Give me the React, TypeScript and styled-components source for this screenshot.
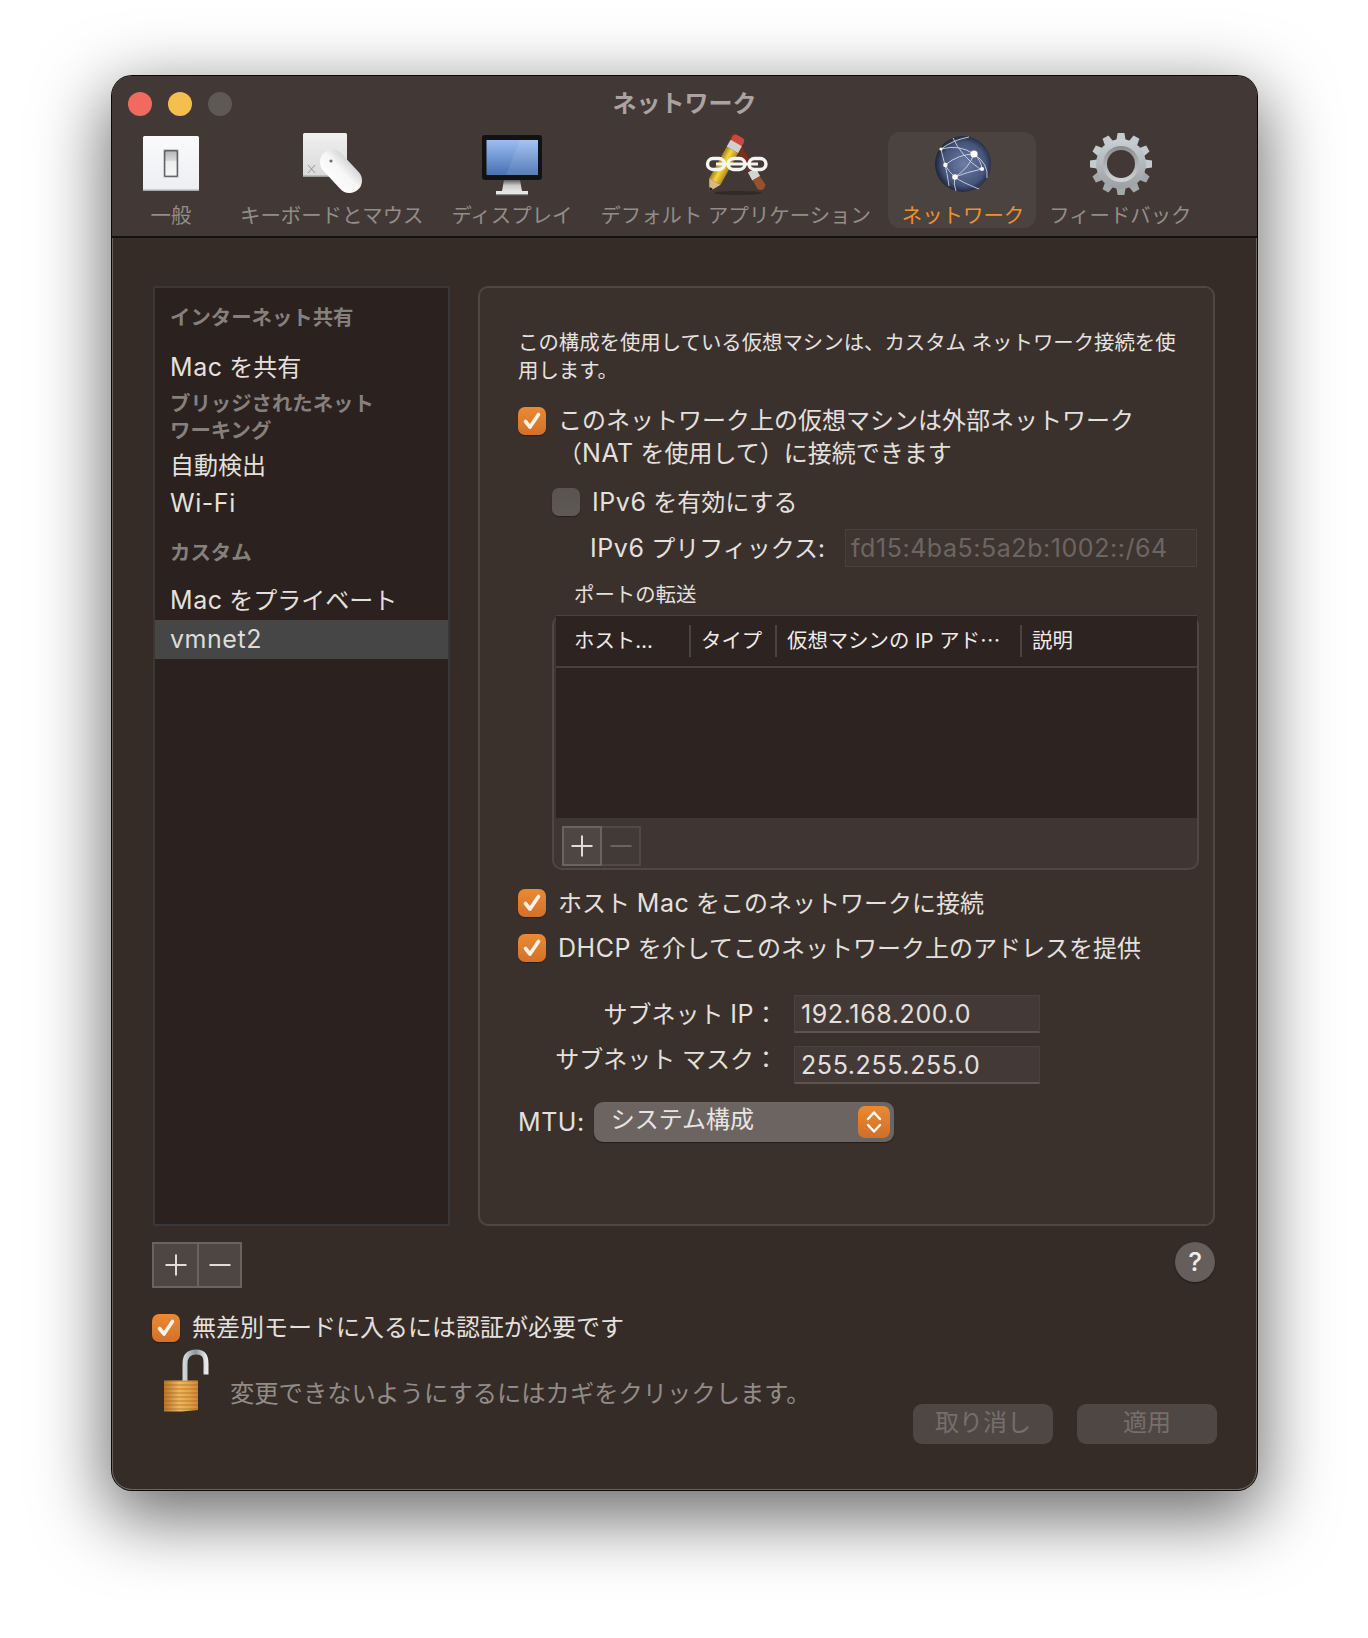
import React from 'react';
import styled, { createGlobalStyle } from 'styled-components';

const Global = createGlobalStyle`
  html, body { margin: 0; padding: 0; background: #fff; }
  body { font-family: Inter, "Noto Sans CJK JP", "Liberation Sans", sans-serif; color: #e4e0de; }
  * { box-sizing: border-box; }
`;

const Page = styled.div`
  width: 1368px;
  height: 1638px;
  padding: 76px 112px;
  overflow: hidden;
`;
const Win = styled.div`
  width: 1145px;
  height: 1414px;
  border-radius: 20px;
  background: #352c28;
  box-shadow: 0 0 0 1px #0c0a09, inset 0 0 0 1px #6a6461, 0 22px 70px 6px rgba(0, 0, 0, 0.58);
  overflow: hidden;
  display: flex;
  flex-direction: column;
`;
const Header = styled.header`
  height: 162px;
  flex: none;
  background: #423936;
  border-bottom: 2px solid #141110;
  display: flex;
  flex-direction: column;
`;
const TitleBar = styled.div`
  height: 56px;
  flex: none;
  display: grid;
  grid-template-columns: 1fr auto 1fr;
  align-items: center;
  padding: 0 16px;
`;
const Lights = styled.div`
  display: flex;
  gap: 16px;
`;
const Light = styled.span<{ $c: string }>`
  width: 24px;
  height: 24px;
  border-radius: 50%;
  background: ${p => p.$c};
`;
const Title = styled.div`
  font-size: 24px;
  font-weight: 700;
  line-height: 32px;
  color: #aaa3a0;
`;
const Tools = styled.nav`
  display: flex;
  padding-left: 4px;
`;
const Tool = styled.div<{ $active?: boolean; $min?: number }>`
  height: 96px;
  padding: ${p => (p.$active ? '0 12px 0 14px' : '0 14px')};
  margin: ${p => (p.$active ? '0 -1px 0 3px' : '0')};
  min-width: ${p => p.$min ?? 0}px;
  border-radius: 12px;
  display: flex;
  flex-direction: column;
  align-items: center;
  background: ${p => (p.$active ? '#4b4340' : 'transparent')};
`;
const ToolIcon = styled.svg`
  width: 80px;
  height: 72px;
  flex: none;
  display: block;
`;
const ToolLabel = styled.span<{ $active?: boolean }>`
  font-size: 20.4px;
  line-height: 24px;
  white-space: pre;
  color: ${p => (p.$active ? '#f0902f' : '#938d8a')};
`;
const L = styled.span`
  font-size: 1.042em;
  letter-spacing: 0.022em;
`;

const Content = styled.div`
  flex: 1;
  padding: 48px 40px 0;
  display: flex;
  flex-direction: column;
`;
const MainGrid = styled.div`
  height: 940px;
  flex: none;
  margin: 0 2px 0 1px;
  display: grid;
  grid-template-columns: 297px 737px;
  column-gap: 28px;
`;
const Sidebar = styled.aside`
  background: #2b211e;
  border: 2px solid #393837;
  padding-top: 16px;
  display: flex;
  flex-direction: column;
`;
const SideHead = styled.div<{ $top?: number }>`
  font-size: 20.4px;
  font-weight: 700;
  line-height: 28px;
  color: #86807d;
  padding-left: 15px;
  margin-top: ${p => p.$top ?? 0}px;
`;
const SideItem = styled.div<{ $top?: number; $selected?: boolean }>`
  font-size: 24px;
  line-height: ${p => (p.$selected ? 38 : 36)}px;
  padding-left: 15px;
  margin-top: ${p => p.$top ?? 0}px;
  color: ${p => (p.$selected ? '#dcdcdc' : '#e4e0de')};
  background: ${p => (p.$selected ? '#464646' : 'transparent')};
`;
const SideWrapped = styled.div`
  font-size: 20.4px;
  font-weight: 700;
  line-height: 27px;
  color: #86807d;
  margin: 4px 0 4px 15px;
  max-width: 218px;
`;
const Panel = styled.section`
  background: #3a312d;
  border: 2px solid #4e4744;
  border-radius: 10px;
  padding: 41px 0 0 38px;
  display: flex;
  flex-direction: column;
`;
const Para = styled.p`
  margin: 0;
  width: 662px;
  font-size: 20.4px;
  line-height: 28px;
  color: #e6e2e0;
`;
const CheckRow = styled.div<{ $top?: number; $left?: number }>`
  display: flex;
  align-items: flex-start;
  gap: 12px;
  margin-top: ${p => p.$top ?? 0}px;
  margin-left: ${p => p.$left ?? 0}px;
  font-size: 24px;
  line-height: 32px;
  color: #e4e0de;
`;
const Box = styled.span<{ $on?: boolean }>`
  width: 28px;
  height: 28px;
  flex: none;
  margin-top: 2px;
  border-radius: 7px;
  display: flex;
  align-items: center;
  justify-content: center;
  background: ${p => (p.$on ? 'linear-gradient(#ea8a33, #d3702a)' : 'linear-gradient(#5a5451, #5f5956)')};
  box-shadow: 0 1px 1px rgba(0, 0, 0, 0.35);
`;
const FieldRow = styled.div`
  margin: 10px 0 0 72px;
  display: grid;
  grid-template-columns: 255px 352px;
  align-items: center;
`;
const FieldLabel = styled.span`
  font-size: 24px;
  line-height: 32px;
  color: #e4e0de;
  white-space: nowrap;
`;
const PrefixInput = styled.div`
  height: 38px;
  padding-left: 5px;
  font-size: 25px;
  letter-spacing: 0.55px;
  line-height: 36px;
  white-space: nowrap;
  color: #6c6663;
  background: #3e3531;
  border: 1px solid #48403c;
`;
const GroupLabel = styled.div`
  margin: 14px 0 0 56px;
  font-size: 20.4px;
  line-height: 28px;
  color: #e4e0de;
`;
const TableWrap = styled.div`
  margin: 6px 0 0 34px;
  width: 647px;
  height: 255px;
  flex: none;
  border: 2px solid #4e4744;
  border-top: none;
  border-radius: 10px;
  padding: 0 0 0 2px;
  display: flex;
  flex-direction: column;
  background: #3f3633;
`;
const TableHead = styled.div`
  height: 53px;
  flex: none;
  background: #2d2320;
  border-top: 1px solid #4a423e;
  border-bottom: 2px solid #48403c;
  display: grid;
  grid-template-columns: 133px 86px 245px 1fr;
  align-items: center;
`;
const HeadCell = styled.div<{ $sep?: boolean }>`
  height: 32px;
  line-height: 32px;
  font-size: 20.4px;
  padding-left: ${p => (p.$sep ? 10 : 18)}px;
  color: #efebe9;
  white-space: nowrap;
  border-left: ${p => (p.$sep ? '2px solid #4b4340' : 'none')};
`;
const TableBody = styled.div`
  height: 150px;
  flex: none;
  background: #2d2320;
`;
const TableFoot = styled.div`
  flex: 1;
  padding: 8px 0 0 6px;
`;
const SegGroup = styled.div`
  display: flex;
`;
const Seg = styled.div<{ $dim?: boolean; $joined?: boolean; $h: number }>`
  display: inline-flex;
  height: ${p => p.$h}px;
  border: 2px solid ${p => (p.$dim ? '#504945' : '#6a6461')};
  border-left-width: ${p => (p.$joined ? 0 : 2)}px;
`;
const SegCell = styled.div<{ $dim?: boolean; $w: number }>`
  width: ${p => p.$w}px;
  display: flex;
  align-items: center;
  justify-content: center;
  background: ${p => (p.$dim ? '#423a36' : '#4e4643')};
`;
const SubnetGrid = styled.div`
  margin-top: 30px;
  display: grid;
  grid-template-columns: 262px 246px;
  grid-auto-rows: 38px;
  row-gap: 13px;
  column-gap: 14px;
  align-items: center;
  justify-content: start;
`;
const SubnetLabel = styled.div<{ $raise?: boolean }>`
  text-align: right;
  font-size: 24px;
  line-height: 32px;
  white-space: nowrap;
  color: #e4e0de;
  padding-right: 2px;
  padding-bottom: ${p => (p.$raise ? 10 : 0)}px;
`;
const ValueInput = styled.div`
  height: 38px;
  padding-left: 6px;
  font-size: 25px;
  letter-spacing: 0.6px;
  line-height: 37px;
  color: #e4e0de;
  background: #433a37;
  border: 1px solid #4a423e;
  border-bottom: 2px solid #5b5451;
`;
const MtuRow = styled.div`
  margin-top: 18px;
  display: flex;
  align-items: center;
  gap: 9px;
`;
const Select = styled.div`
  width: 300px;
  height: 40px;
  padding: 0 4px 0 17px;
  border-radius: 9px;
  background: #6b6461;
  box-shadow: 0 1px 1px rgba(0, 0, 0, 0.4);
  display: flex;
  align-items: center;
  justify-content: space-between;
  font-size: 24px;
`;
const SelectText = styled.span`
  line-height: 32px;
  margin-top: -5px;
  color: #e8e4e2;
`;
const Stepper = styled.span`
  width: 32px;
  height: 32px;
  border-radius: 7px;
  background: linear-gradient(#e88a35, #cf6f29);
  display: flex;
  align-items: center;
  justify-content: center;
`;
const UtilRow = styled.div`
  margin-top: 16px;
  padding-right: 2px;
  display: flex;
  align-items: flex-start;
  justify-content: space-between;
`;
const Help = styled.div`
  width: 40px;
  height: 40px;
  border-radius: 50%;
  background: #655e5b;
  color: #f0eeec;
  font-size: 26px;
  font-weight: 500;
  line-height: 40px;
  text-align: center;
  box-shadow: 0 1px 2px rgba(0, 0, 0, 0.4);
`;
const Footer = styled.div`
  margin-top: 4px;
  height: 96px;
  display: flex;
  justify-content: space-between;
  align-items: flex-end;
`;
const LockRow = styled.div`
  align-self: flex-start;
  display: flex;
  align-items: flex-start;
`;
const LockIcon = styled.svg`
  width: 78px;
  height: 68px;
  flex: none;
  display: block;
`;
const LockText = styled.span`
  margin-top: 31px;
  font-size: 24.3px;
  line-height: 28px;
  color: #928c89;
  white-space: nowrap;
`;
const Buttons = styled.div`
  display: flex;
  gap: 24px;
`;
const Btn = styled.div`
  width: 140px;
  height: 40px;
  border-radius: 9px;
  background: #4f4744;
  color: #756f6c;
  font-size: 24px;
  line-height: 38px;
  text-align: center;
`;

const Check = () => (
  <svg width="20" height="20" viewBox="0 0 20 20">
    <path d="M3.5 10.5 L8 16 L16.5 3.5" fill="none" stroke="#fbf3ea" strokeWidth="3.6" strokeLinecap="round" strokeLinejoin="round" />
  </svg>
);
const Plus = ({ c = '#e0dcda', s = 22 }: { c?: string; s?: number }) => (
  <svg width={s} height={s} viewBox="0 0 22 22">
    <path d="M11 0.5V21.5M0.5 11H21.5" stroke={c} strokeWidth="2" />
  </svg>
);
const Minus = ({ c = '#e0dcda', s = 22 }: { c?: string; s?: number }) => (
  <svg width={s} height={s} viewBox="0 0 22 22">
    <path d="M0.5 11H21.5" stroke={c} strokeWidth="2" />
  </svg>
);

const SwitchIcon = () => (
  <ToolIcon viewBox="0 0 80 72">
    <defs>
      <linearGradient id="sw1" x1="0" y1="0" x2="0" y2="1">
        <stop offset="0" stopColor="#fbfbfd" />
        <stop offset="1" stopColor="#eceef1" />
      </linearGradient>
      <linearGradient id="sw2" x1="0" y1="0" x2="0" y2="1">
        <stop offset="0" stopColor="#b4b5b6" />
        <stop offset="0.38" stopColor="#d8d9da" />
        <stop offset="0.42" stopColor="#eeeeef" />
        <stop offset="1" stopColor="#f6f6f7" />
      </linearGradient>
    </defs>
    <rect x="12" y="4" width="56" height="55" rx="1.5" fill="url(#sw1)" />
    <rect x="12" y="57.5" width="56" height="1.5" fill="#a9abae" />
    <rect x="32" y="17" width="16" height="29" rx="1" fill="#cfd0d2" />
    <rect x="33.8" y="18.8" width="12.4" height="25.4" fill="url(#sw2)" stroke="#33363a" strokeWidth="1" />
  </ToolIcon>
);
const MouseIcon = () => (
  <ToolIcon viewBox="0 0 80 72">
    <defs>
      <linearGradient id="kb1" x1="0" y1="0" x2="0" y2="1">
        <stop offset="0" stopColor="#f0f0f0" />
        <stop offset="1" stopColor="#d9d9d9" />
      </linearGradient>
      <linearGradient id="ms1" x1="0" y1="0" x2="0" y2="1">
        <stop offset="0" stopColor="#d6d6d6" />
        <stop offset="0.45" stopColor="#f6f6f6" />
        <stop offset="1" stopColor="#fdfdfd" />
      </linearGradient>
    </defs>
    <rect x="11" y="1" width="44" height="44" rx="1.5" fill="url(#kb1)" />
    <rect x="11" y="43.5" width="44" height="1.5" fill="#9b9b9b" />
    <path d="M16 33L23 41M23 33L16 41" stroke="#8e8e8e" strokeWidth="0.9" fill="none" />
    <rect x="-25" y="-12.5" width="50" height="25" rx="12.5" fill="url(#ms1)" transform="translate(49 39.3) rotate(47)" />
    <circle cx="39" cy="29" r="1.6" fill="#6e6e6e" />
  </ToolIcon>
);
const MonitorIcon = () => (
  <ToolIcon viewBox="0 0 80 72">
    <defs>
      <linearGradient id="mon1" x1="0" y1="0" x2="0" y2="1">
        <stop offset="0" stopColor="#9dbdf2" />
        <stop offset="1" stopColor="#4672b3" />
      </linearGradient>
      <linearGradient id="mon2" x1="0" y1="0" x2="0" y2="1">
        <stop offset="0" stopColor="#5f5f5f" />
        <stop offset="0.5" stopColor="#c9c9c9" />
        <stop offset="1" stopColor="#e4e4e4" />
      </linearGradient>
    </defs>
    <rect x="10" y="3" width="60" height="45" rx="3" fill="#121212" />
    <rect x="14.5" y="8" width="51.5" height="35" fill="url(#mon1)" />
    <path d="M48 8H66V43H34Z" fill="#ffffff" opacity="0.09" />
    <path d="M32 48H48L50 59H30Z" fill="url(#mon2)" />
    <rect x="24" y="59" width="32" height="4" fill="#e6e6e6" />
    <rect x="24" y="62" width="32" height="1.2" fill="#8a8a8a" />
  </ToolIcon>
);
const AppIcon = () => (
  <ToolIcon viewBox="0 0 80 72">
    <defs>
      <linearGradient id="pen1" x1="0" y1="0" x2="1" y2="0">
        <stop offset="0" stopColor="#a67f18" />
        <stop offset="0.45" stopColor="#f5d73e" />
        <stop offset="1" stopColor="#b18a1c" />
      </linearGradient>
    </defs>
    <ellipse cx="42" cy="61" rx="24" ry="2" fill="#2a2422" opacity="0.7" />
    <g transform="translate(51.5 30.5) rotate(-29)">
      <rect x="-3" y="-32" width="6" height="43" fill="#7d2e1a" />
      <rect x="-4.5" y="9" width="9" height="9" fill="#d4d4d4" />
      <path d="M-4 18H4L5 28Q0 34 -4 28Z" fill="#96522d" />
    </g>
    <g transform="translate(28.6 32) rotate(29)">
      <rect x="-6.5" y="-31.5" width="13" height="9" rx="4" fill="#cf4640" />
      <rect x="-6.5" y="-24" width="13" height="8" fill="#cfcfcf" />
      <rect x="-6.5" y="-16" width="13" height="36" fill="url(#pen1)" />
      <path d="M-6.5 20H6.5L0 31.5Z" fill="#d8b888" />
      <path d="M-2 27.5H2L0 31.5Z" fill="#161616" />
    </g>
    <path d="M20 32H62" stroke="#f2f2f2" strokeWidth="3" />
    <rect x="11.5" y="26.5" width="17" height="11" rx="5.5" fill="none" stroke="#f4f4f4" strokeWidth="3.4" />
    <rect x="32" y="26.5" width="17" height="11" rx="5.5" fill="none" stroke="#f4f4f4" strokeWidth="3.4" />
    <rect x="53" y="26.5" width="17" height="11" rx="5.5" fill="none" stroke="#f4f4f4" strokeWidth="3.4" />
  </ToolIcon>
);
const GlobeIcon = () => (
  <ToolIcon viewBox="0 0 80 72">
    <defs>
      <radialGradient id="gl1" cx="0.52" cy="0.5" r="0.55">
        <stop offset="0" stopColor="#6d7da6" />
        <stop offset="0.7" stopColor="#46537a" />
        <stop offset="1" stopColor="#141a29" />
      </radialGradient>
    </defs>
    <circle cx="40" cy="32" r="28" fill="url(#gl1)" />
    <g fill="none" stroke="#dfe4ee" strokeWidth="0.9" opacity="0.9">
      <path d="M18 17Q36 12 51 22T64 46" />
      <path d="M22 33Q36 22 51 22" />
      <path d="M22 33Q26 40 32 45T56 57" />
      <path d="M32 45Q44 40 59 37" />
      <path d="M51 22Q58 28 59 37" />
      <path d="M51 22Q46 36 32 45" />
      <path d="M30 6Q38 24 57 37" />
      <path d="M18 17Q20 26 22 33T26 54" />
      <path d="M18 17Q30 8 46 5" />
      <path d="M32 45Q30 52 33 59" />
    </g>
    <g fill="#fff">
      <circle cx="51" cy="22" r="3.6" />
      <circle cx="22.4" cy="33" r="2.2" />
      <circle cx="32" cy="45" r="2.8" />
      <circle cx="59" cy="37" r="2.1" />
      <circle cx="18" cy="17" r="1.6" />
    </g>
  </ToolIcon>
);
const GearIcon = () => {
  const teeth = Array.from({ length: 12 }, (_, i) => i * 30);
  return (
    <ToolIcon viewBox="0 0 80 72">
      <defs>
        <linearGradient id="gr1" x1="0" y1="0" x2="0" y2="1">
          <stop offset="0" stopColor="#c9d0d4" />
          <stop offset="1" stopColor="#9ba0a3" />
        </linearGradient>
        <linearGradient id="gr2" x1="0" y1="0" x2="0" y2="1">
          <stop offset="0" stopColor="#8a8d90" />
          <stop offset="1" stopColor="#d2d5d7" />
        </linearGradient>
      </defs>
      <g transform="translate(41 32)">
        {teeth.map(a => (
          <path key={a} d="M-4.6 -24 L-3.4 -31 H3.4 L4.6 -24Z" fill={a > 90 && a < 270 ? '#a3a8ab' : '#c4cbcf'} transform={`rotate(${a})`} />
        ))}
        <circle r="25" fill="url(#gr1)" />
        <circle r="18" fill="url(#gr2)" />
        <circle r="14" fill="#423936" />
      </g>
    </ToolIcon>
  );
};

const Lock = () => (
  <LockIcon viewBox="0 0 78 68">
    <defs>
      <linearGradient id="lk1" x1="0" y1="0" x2="1" y2="0">
        <stop offset="0" stopColor="#cfd6da" />
        <stop offset="0.5" stopColor="#8d979c" />
        <stop offset="1" stopColor="#e6eaec" />
      </linearGradient>
      <linearGradient id="lk2" x1="0" y1="0" x2="1" y2="0">
        <stop offset="0" stopColor="#b8752a" />
        <stop offset="0.45" stopColor="#f0b65c" />
        <stop offset="0.72" stopColor="#e5a548" />
        <stop offset="1" stopColor="#c98a34" />
      </linearGradient>
      <pattern id="lk3" width="4" height="4" patternUnits="userSpaceOnUse">
        <rect width="4" height="2" fill="#8a5518" opacity="0.28" />
      </pattern>
    </defs>
    <path d="M33 33V15.5C33 8 37 4 44.5 4S54 8 54 15.5V26.5" fill="none" stroke="url(#lk1)" strokeWidth="5" />
    <path d="M12 32.5H46V62L30 63.5H12Z" fill="url(#lk2)" />
    <path d="M12 32.5H46V62L30 63.5H12Z" fill="url(#lk3)" />
  </LockIcon>
);

export default function App() {
  return (
    <Page>
      <Global />
      <Win>
        <Header>
          <TitleBar>
            <Lights>
              <Light $c="#f06a5f" />
              <Light $c="#f5bf4f" />
              <Light $c="#5f5956" />
            </Lights>
            <Title>ネットワーク</Title>
            <span />
          </TitleBar>
          <Tools>
            <Tool $min={110}><SwitchIcon /><ToolLabel>一般</ToolLabel></Tool>
            <Tool><MouseIcon /><ToolLabel>キーボードとマウス</ToolLabel></Tool>
            <Tool><MonitorIcon /><ToolLabel>ディスプレイ</ToolLabel></Tool>
            <Tool><AppIcon /><ToolLabel>デフォルト アプリケーション</ToolLabel></Tool>
            <Tool $active><GlobeIcon /><ToolLabel $active>ネットワーク</ToolLabel></Tool>
            <Tool><GearIcon /><ToolLabel>フィードバック</ToolLabel></Tool>
          </Tools>
        </Header>
        <Content>
          <MainGrid>
            <Sidebar>
              <SideHead>インターネット共有</SideHead>
              <SideItem $top={17}><L>Mac</L> を共有</SideItem>
              <SideWrapped>ブリッジされたネットワーキング</SideWrapped>
              <SideItem>自動検出</SideItem>
              <SideItem $top={1}><L>Wi-Fi</L></SideItem>
              <SideHead $top={17}>カスタム</SideHead>
              <SideItem $top={15}><L>Mac</L> をプライベート</SideItem>
              <SideItem $top={1} $selected><L>vmnet2</L></SideItem>
            </Sidebar>
            <Panel>
              <Para>この構成を使用している仮想マシンは、カスタム ネットワーク接続を使用します。</Para>
              <CheckRow $top={20}>
                <Box $on><Check /></Box>
                <span>このネットワーク上の仮想マシンは外部ネットワーク<br />（<L>NAT</L> を使用して）に接続できます</span>
              </CheckRow>
              <CheckRow $top={16} $left={34}>
                <Box />
                <span><L>IPv6</L> を有効にする</span>
              </CheckRow>
              <FieldRow>
                <FieldLabel><L>IPv6</L> プリフィックス:</FieldLabel>
                <PrefixInput>fd15:4ba5:5a2b:1002::/64</PrefixInput>
              </FieldRow>
              <GroupLabel>ポートの転送</GroupLabel>
              <TableWrap>
                <TableHead>
                  <HeadCell>ホスト…</HeadCell>
                  <HeadCell $sep>タイプ</HeadCell>
                  <HeadCell $sep>仮想マシンの IP アド⋯</HeadCell>
                  <HeadCell $sep>説明</HeadCell>
                </TableHead>
                <TableBody />
                <TableFoot>
                  <SegGroup>
                    <Seg $h={40}><SegCell $w={36}><Plus /></SegCell></Seg>
                    <Seg $h={40} $dim $joined><SegCell $w={37} $dim><Minus c="#6a6461" /></SegCell></Seg>
                  </SegGroup>
                </TableFoot>
              </TableWrap>
              <CheckRow $top={17}>
                <Box $on><Check /></Box>
                <span>ホスト <L>Mac</L> をこのネットワークに接続</span>
              </CheckRow>
              <CheckRow $top={12}>
                <Box $on><Check /></Box>
                <span><L>DHCP</L> を介してこのネットワーク上のアドレスを提供</span>
              </CheckRow>
              <SubnetGrid>
                <SubnetLabel>サブネット <L>IP</L>：</SubnetLabel>
                <ValueInput>192.168.200.0</ValueInput>
                <SubnetLabel $raise>サブネット マスク：</SubnetLabel>
                <ValueInput>255.255.255.0</ValueInput>
              </SubnetGrid>
              <MtuRow>
                <FieldLabel><L>MTU:</L></FieldLabel>
                <Select>
                  <SelectText>システム構成</SelectText>
                  <Stepper>
                    <svg width="18" height="26" viewBox="0 0 18 26">
                      <path d="M3 10L9 3.5L15 10M3 16L9 22.5L15 16" fill="none" stroke="#fff" strokeWidth="2.4" strokeLinecap="round" strokeLinejoin="round" />
                    </svg>
                  </Stepper>
                </Select>
              </MtuRow>
            </Panel>
          </MainGrid>
          <UtilRow>
            <SegGroup>
              <Seg $h={46}><SegCell $w={43}><Plus /></SegCell></Seg>
              <Seg $h={46} $joined><SegCell $w={41}><Minus /></SegCell></Seg>
            </SegGroup>
            <Help>?</Help>
          </UtilRow>
          <CheckRow $top={24}>
            <Box $on><Check /></Box>
            <span>無差別モードに入るには認証が必要です</span>
          </CheckRow>
          <Footer>
            <LockRow>
              <Lock />
              <LockText>変更できないようにするにはカギをクリックします。</LockText>
            </LockRow>
            <Buttons>
              <Btn>取り消し</Btn>
              <Btn>適用</Btn>
            </Buttons>
          </Footer>
        </Content>
      </Win>
    </Page>
  );
}
